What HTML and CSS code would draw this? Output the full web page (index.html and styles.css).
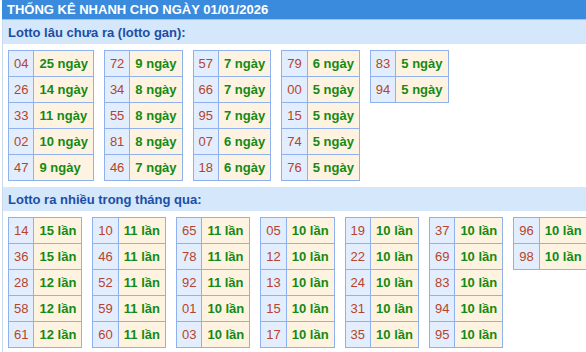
FILE: index.html
```html
<!DOCTYPE html>
<html lang="vi">
<head>
<meta charset="utf-8">
<title>Thống kê nhanh</title>
<link rel="stylesheet" href="styles.css">
</head>
<body>
<div class="wrap">
  <div class="head">THỐNG KÊ NHANH CHO NGÀY 01/01/2026</div>
  <div class="box">
    <div class="sub">Lotto lâu chưa ra (lotto gan):</div>
    <div class="group">
      <table class="t"><tr><td class="n">04</td><td class="v">25 ngày</td></tr><tr><td class="n">26</td><td class="v">14 ngày</td></tr><tr><td class="n">33</td><td class="v">11 ngày</td></tr><tr><td class="n">02</td><td class="v">10 ngày</td></tr><tr><td class="n">47</td><td class="v">9 ngày</td></tr></table>
      <table class="t"><tr><td class="n">72</td><td class="v">9 ngày</td></tr><tr><td class="n">34</td><td class="v">8 ngày</td></tr><tr><td class="n">55</td><td class="v">8 ngày</td></tr><tr><td class="n">81</td><td class="v">8 ngày</td></tr><tr><td class="n">46</td><td class="v">7 ngày</td></tr></table>
      <table class="t"><tr><td class="n">57</td><td class="v">7 ngày</td></tr><tr><td class="n">66</td><td class="v">7 ngày</td></tr><tr><td class="n">95</td><td class="v">7 ngày</td></tr><tr><td class="n">07</td><td class="v">6 ngày</td></tr><tr><td class="n">18</td><td class="v">6 ngày</td></tr></table>
      <table class="t"><tr><td class="n">79</td><td class="v">6 ngày</td></tr><tr><td class="n">00</td><td class="v">5 ngày</td></tr><tr><td class="n">15</td><td class="v">5 ngày</td></tr><tr><td class="n">74</td><td class="v">5 ngày</td></tr><tr><td class="n">76</td><td class="v">5 ngày</td></tr></table>
      <table class="t"><tr><td class="n">83</td><td class="v">5 ngày</td></tr><tr><td class="n">94</td><td class="v">5 ngày</td></tr></table>
    </div>
    <div class="sub">Lotto ra nhiều trong tháng qua:</div>
    <div class="group">
      <table class="t"><tr><td class="n">14</td><td class="v">15 lần</td></tr><tr><td class="n">36</td><td class="v">15 lần</td></tr><tr><td class="n">28</td><td class="v">12 lần</td></tr><tr><td class="n">58</td><td class="v">12 lần</td></tr><tr><td class="n">61</td><td class="v">12 lần</td></tr></table>
      <table class="t"><tr><td class="n">10</td><td class="v">11 lần</td></tr><tr><td class="n">46</td><td class="v">11 lần</td></tr><tr><td class="n">52</td><td class="v">11 lần</td></tr><tr><td class="n">59</td><td class="v">11 lần</td></tr><tr><td class="n">60</td><td class="v">11 lần</td></tr></table>
      <table class="t"><tr><td class="n">65</td><td class="v">11 lần</td></tr><tr><td class="n">78</td><td class="v">11 lần</td></tr><tr><td class="n">92</td><td class="v">11 lần</td></tr><tr><td class="n">01</td><td class="v">10 lần</td></tr><tr><td class="n">03</td><td class="v">10 lần</td></tr></table>
      <table class="t"><tr><td class="n">05</td><td class="v">10 lần</td></tr><tr><td class="n">12</td><td class="v">10 lần</td></tr><tr><td class="n">13</td><td class="v">10 lần</td></tr><tr><td class="n">15</td><td class="v">10 lần</td></tr><tr><td class="n">17</td><td class="v">10 lần</td></tr></table>
      <table class="t"><tr><td class="n">19</td><td class="v">10 lần</td></tr><tr><td class="n">22</td><td class="v">10 lần</td></tr><tr><td class="n">24</td><td class="v">10 lần</td></tr><tr><td class="n">31</td><td class="v">10 lần</td></tr><tr><td class="n">35</td><td class="v">10 lần</td></tr></table>
      <table class="t"><tr><td class="n">37</td><td class="v">10 lần</td></tr><tr><td class="n">69</td><td class="v">10 lần</td></tr><tr><td class="n">83</td><td class="v">10 lần</td></tr><tr><td class="n">94</td><td class="v">10 lần</td></tr><tr><td class="n">95</td><td class="v">10 lần</td></tr></table>
      <table class="t"><tr><td class="n">96</td><td class="v">10 lần</td></tr><tr><td class="n">98</td><td class="v">10 lần</td></tr></table>
    </div>
  </div>
</div>
</body>
</html>
```
FILE: styles.css
```css
html, body {
  margin: 0;
  padding: 0;
  background: #fff;
  overflow: hidden;
}
body {
  font-family: "Liberation Sans", Arial, sans-serif;
  font-size: 13px;
}
.wrap {
  margin-left: 2px;
  width: 640px;
}
.head {
  background: #3a8bdd;
  color: #fff;
  font-weight: bold;
  line-height: 19px;
  padding-left: 5px;
  border-bottom: 1px solid #a9c1de;
}
.box {
  border-left: 1px solid #c9d8ea;
}
.sub {
  background: #d4e7fb;
  color: #1b4ea6;
  font-weight: bold;
  line-height: 15px;
  padding: 5px 0 4px 5px;
}
.group {
  display: flex;
  align-items: flex-start;
  gap: 10px;
  padding: 6px 0 6px 5px;
}
.t {
  border-collapse: collapse;
  flex: none;
}
.t td {
  border: 1px solid #8fb1ef;
  padding: 5px 5px;
  line-height: 15px;
  white-space: nowrap;
}
.n {
  background: #e2eefd;
  color: #b7432b;
}
.v {
  background: #fef3e1;
  color: #148a14;
  font-weight: bold;
}
```
